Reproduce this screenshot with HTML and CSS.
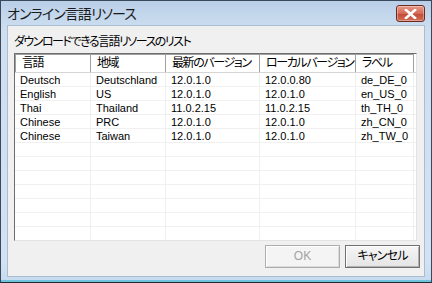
FILE: index.html
```html
<!DOCTYPE html>
<html lang="ja">
<head>
    <meta charset="UTF-8">
    <title>オンライン言語リソース</title>
    <link rel="stylesheet" href="styles.css">
</head>
<body>
<div id="window">
    <div id="titlebar">
        <span class="caption">オンライン言語リソース</span>
        <div class="close">
            <svg width="13" height="10" viewBox="0 0 13 10">
                <path d="M2 1 L11 9 M11 1 L2 9" stroke="#fff" stroke-width="2.6" stroke-linecap="square"/>
            </svg>
        </div>
    </div>
    <div id="client">
        <div class="label">ダウンロードできる言語リソースのリスト</div>
        <div class="list">
            <div class="header">
                <div class="col c1">言語</div>
                <div class="col c2">地域</div>
                <div class="col c3">最新のバージョン</div>
                <div class="col c4">ローカルバージョン</div>
                <div class="col c5">ラベル</div>
            </div>
            <div class="rows">
                <div class="row"><div class="col c1">Deutsch</div><div class="col c2">Deutschland</div><div class="col c3">12.0.1.0</div><div class="col c4">12.0.0.80</div><div class="col c5">de_DE_0</div></div>
                <div class="row"><div class="col c1">English</div><div class="col c2">US</div><div class="col c3">12.0.1.0</div><div class="col c4">12.0.1.0</div><div class="col c5">en_US_0</div></div>
                <div class="row"><div class="col c1">Thai</div><div class="col c2">Thailand</div><div class="col c3">11.0.2.15</div><div class="col c4">11.0.2.15</div><div class="col c5">th_TH_0</div></div>
                <div class="row"><div class="col c1">Chinese</div><div class="col c2">PRC</div><div class="col c3">12.0.1.0</div><div class="col c4">12.0.1.0</div><div class="col c5">zh_CN_0</div></div>
                <div class="row"><div class="col c1">Chinese</div><div class="col c2">Taiwan</div><div class="col c3">12.0.1.0</div><div class="col c4">12.0.1.0</div><div class="col c5">zh_TW_0</div></div>
                <div class="row"><div class="col c1"></div><div class="col c2"></div><div class="col c3"></div><div class="col c4"></div><div class="col c5"></div></div>
                <div class="row"><div class="col c1"></div><div class="col c2"></div><div class="col c3"></div><div class="col c4"></div><div class="col c5"></div></div>
                <div class="row"><div class="col c1"></div><div class="col c2"></div><div class="col c3"></div><div class="col c4"></div><div class="col c5"></div></div>
                <div class="row"><div class="col c1"></div><div class="col c2"></div><div class="col c3"></div><div class="col c4"></div><div class="col c5"></div></div>
                <div class="row"><div class="col c1"></div><div class="col c2"></div><div class="col c3"></div><div class="col c4"></div><div class="col c5"></div></div>
                <div class="row"><div class="col c1"></div><div class="col c2"></div><div class="col c3"></div><div class="col c4"></div><div class="col c5"></div></div>
                <div class="row"><div class="col c1"></div><div class="col c2"></div><div class="col c3"></div><div class="col c4"></div><div class="col c5"></div></div>
            </div>
        </div>
        <div class="buttons">
            <div class="button disabled">OK</div>
            <div class="button">キャンセル</div>
        </div>
    </div>
</div>
</body>
</html>
```

FILE: styles.css
```css
html, body {
    margin: 0;
    padding: 0;
}
body {
    font-family: "Liberation Sans", "Noto Sans CJK JP", sans-serif;
    font-size: 11px;
    font-feature-settings: "palt";
    color: #000;
}
#window {
    width: 432px;
    height: 283px;
    box-sizing: border-box;
    border: 1px solid #3a4a5c;
    border-bottom-color: #1f2a33;
    background: linear-gradient(#b9cfe8, #cfdff0 30px, #d3e2f2 260px, #c6dbef);
    padding: 0 6px 5px 6px;
    display: flex;
    flex-direction: column;
    box-shadow: inset 0 -2px 0 #6fc3dc;
}
#titlebar {
    height: 24px;
    display: flex;
    justify-content: space-between;
    align-items: flex-start;
}
#titlebar .caption {
    font-size: 14px;
    line-height: 16px;
    margin-top: 5px;
    letter-spacing: -0.9px;
    color: #1a1a1a;
}
#titlebar .close {
    width: 29px;
    height: 17px;
    margin-top: 4px;
    box-sizing: border-box;
    border: 1px solid #6e2b22;
    border-radius: 3px;
    background: linear-gradient(#e99b8c, #d46a55 50%, #c24a35 51%, #d16e55);
    box-shadow: inset 0 0 0 1px rgba(255,255,255,0.35);
    display: flex;
    align-items: center;
    justify-content: center;
}
#client {
    flex: 1;
    background: #f0f0f0;
    border: 1px solid #a9bdd2;
    padding: 8px 4px 0 6px;
}
.label {
    font-size: 12px;
    line-height: 16px;
    letter-spacing: -1.5px;
}
.list {
    margin-top: 3px;
    width: 403px;
    height: 188px;
    box-sizing: border-box;
    background: #fff;
    border: 1px solid #e3e3e3;
    border-left-color: #6d6d6d;
    border-top-color: #6d6d6d;
    overflow: hidden;
}
.header {
    display: flex;
    height: 19px;
    border-bottom: 1px solid #d5d5d5;
    box-sizing: border-box;
}
.header .col {
    font-size: 12px;
    line-height: 17px;
    padding-left: 6px;
    border-right: 1px solid #a0a0a0;
    border-top: 1px solid #a0a0a0;
    white-space: nowrap;
    letter-spacing: -1.4px;
}
.header .c1 {
    border-left: 1px solid #a0a0a0;
}
.col {
    box-sizing: border-box;
    overflow: hidden;
}
.c1 { width: 76px; }
.c2 { width: 75px; }
.c3 { width: 94px; }
.c4 { width: 96px; }
.c5 { width: 58px; }
.row {
    display: flex;
    height: 14px;
    box-sizing: border-box;
    border-bottom: 1px solid #f0f0f0;
}
.row .col {
    line-height: 15px;
    padding-left: 5px;
    border-right: 1px solid #f0f0f0;
    white-space: nowrap;
}
.buttons {
    display: flex;
    justify-content: flex-end;
    gap: 5px;
    margin-top: 4px;
}
.button {
    width: 75px;
    height: 23px;
    box-sizing: border-box;
    border: 1px solid #707070;
    background: linear-gradient(#f6f6f6, #e4e4e4);
    box-shadow: inset 1px 1px 0 #fff, inset -1px -1px 0 #b0b0b0;
    font-size: 12px;
    line-height: 21px;
    text-align: center;
    letter-spacing: -0.8px;
}
.button.disabled {
    border-color: #adadad;
    background: #f4f4f4;
    color: #a3a3a3;
    box-shadow: inset 1px 1px 0 #fff, inset -1px -1px 0 #dcdcdc;
    letter-spacing: 0;
}
```
